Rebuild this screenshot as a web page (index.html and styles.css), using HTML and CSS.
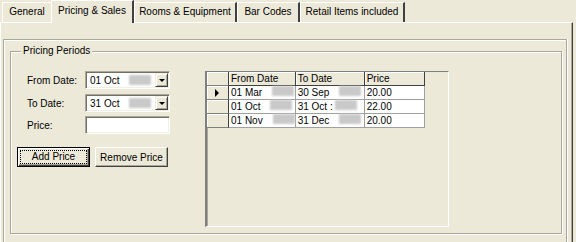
FILE: index.html
```html
<!DOCTYPE html>
<html>
<head>
  <title>Pricing &amp; Sales</title>
  <link rel="stylesheet" href="styles.css">
</head>
<body>
  <div class="tabs">
    <div class="tab tab-general">General</div>
    <div class="tab tab-active tab-pricing">Pricing &amp; Sales</div>
    <div class="tab tab-rooms">Rooms &amp; Equipment</div>
    <div class="tab tab-bar">Bar Codes</div>
    <div class="tab tab-retail">Retail Items included</div>
  </div>
  <div class="page">
    <div class="frame">
      <div class="group">
        <span class="group-title">Pricing Periods</span>
        <div class="group-body">
          <div class="form">
            <div class="field">
              <label>From Date:</label>
              <div class="combo">
                <span class="combo-text">01 Oct<span class="blur"></span></span>
                <span class="drop"><span class="arrow"></span></span>
              </div>
            </div>
            <div class="field field-to">
              <label>To Date:</label>
              <div class="combo">
                <span class="combo-text">31 Oct<span class="blur"></span></span>
                <span class="drop"><span class="arrow"></span></span>
              </div>
            </div>
            <div class="field field-price">
              <label>Price:</label>
              <div class="textbox"></div>
            </div>
            <div class="buttons">
              <button class="btn btn-default"><span class="focus">Add Price</span></button>
              <button class="btn">Remove Price</button>
            </div>
          </div>
          <div class="grid">
            <table>
              <thead>
                <tr>
                  <th class="rowhead"></th>
                  <th class="col-from">From Date</th>
                  <th class="col-to">To Date</th>
                  <th class="col-price">Price</th>
                </tr>
              </thead>
              <tbody>
                <tr>
                  <td class="rowhead"><span class="pointer"></span></td>
                  <td>01 Mar<span class="blur"></span></td>
                  <td>30 Sep<span class="blur"></span></td>
                  <td>20.00</td>
                </tr>
                <tr>
                  <td class="rowhead"></td>
                  <td>01 Oct<span class="blur"></span></td>
                  <td>31 Oct :<span class="blur blur-near"></span></td>
                  <td>22.00</td>
                </tr>
                <tr>
                  <td class="rowhead"></td>
                  <td>01 Nov<span class="blur"></span></td>
                  <td>31 Dec<span class="blur"></span></td>
                  <td>20.00</td>
                </tr>
              </tbody>
            </table>
          </div>
        </div>
      </div>
    </div>
  </div>
</body>
</html>
```

FILE: styles.css
```css
body {
  margin: 0;
  width: 576px;
  height: 242px;
  overflow: hidden;
  background-color: #ece9d8;
  font-family: "Liberation Sans", Arial, sans-serif;
  font-size: 10px;
  color: #000;
}

/* tab strip */

.tabs {
  display: flex;
  align-items: flex-end;
  height: 22px;
  padding-left: 2px;
  position: relative;
  z-index: 1;
}

.tab {
  box-sizing: border-box;
  height: 20px;
  line-height: 18px;
  text-align: center;
  border-top: 1px solid #fff;
  border-left: 1px solid #fff;
  border-right: 2px solid #404040;
  white-space: nowrap;
}

.tab-general {
  width: 49px;
  border-right: none;
}

.tab-pricing {
  width: 83px;
}

.tab-rooms {
  width: 103px;
}

.tab-bar {
  width: 63px;
}

.tab-retail {
  width: 105px;
}

.tab-active {
  height: 23px;
  margin-bottom: -1px;
  line-height: 20px;
  background-color: #ece9d8;
}

/* tab page */

.page {
  box-sizing: border-box;
  width: 573px;
  height: 220px;
  border-top: 1px solid #fff;
  border-left: 1px solid #fff;
  border-right: 1px solid #404040;
  box-shadow: inset -1px 0 0 #aca899;
  padding-top: 16px;
  padding-left: 2px;
}

.frame {
  box-sizing: border-box;
  width: 564px;
  height: 210px;
  border-top: 1px solid #aca899;
  border-left: 1px solid #aca899;
  border-right: 1px solid #aca899;
  box-shadow: inset 1px 1px 0 #fff, 1px 0 0 #fff;
  padding-top: 11px;
  padding-left: 6px;
}

.group {
  box-sizing: border-box;
  width: 552px;
  height: 183px;
  border: 1px solid #aca899;
  box-shadow: inset 1px 1px 0 #fff, 1px 1px 0 #fff;
  padding-left: 6px;
}

.group-title {
  display: inline-block;
  margin-top: -7px;
  margin-left: 4px;
  padding: 0 2px;
  height: 12px;
  line-height: 12px;
  background-color: #ece9d8;
  vertical-align: top;
}

.group-body {
  display: flex;
  margin-top: 8px;
}

/* form side */

.form {
  flex: none;
  width: 153px;
}

.field {
  display: flex;
  align-items: center;
  height: 18px;
}

.field-to {
  margin-top: 5px;
}

.field-price {
  margin-top: 4px;
}

.field label {
  flex: none;
  width: 68px;
  padding-left: 10px;
  box-sizing: border-box;
  white-space: nowrap;
}

.combo,
.textbox {
  flex: none;
  box-sizing: border-box;
  display: flex;
  align-items: center;
  width: 85px;
  height: 18px;
  background-color: #fff;
  border-top: 1px solid #aca899;
  border-left: 1px solid #aca899;
  border-right: 1px solid #fff;
  border-bottom: 1px solid #fff;
  box-shadow: inset 1px 1px 0 #716f64, inset -1px -1px 0 #f1efe2;
}

.combo-text {
  flex: 1;
  padding-left: 4px;
  display: flex;
  align-items: center;
}

.blur {
  display: inline-block;
  width: 22px;
  height: 10px;
  margin-left: 10px;
  background-color: #c9c9c9;
  filter: blur(1.2px);
}

.blur-near {
  margin-left: 2px;
}

.drop {
  box-sizing: border-box;
  width: 13px;
  height: 14px;
  margin-right: 1px;
  display: flex;
  align-items: center;
  justify-content: center;
  background-color: #ece9d8;
  border-top: 1px solid #f1efe2;
  border-left: 1px solid #f1efe2;
  border-right: 1px solid #404040;
  border-bottom: 1px solid #404040;
  box-shadow: inset 1px 1px 0 #fff, inset -1px -1px 0 #aca899;
}

.arrow {
  width: 0;
  height: 0;
  border-left: 3px solid transparent;
  border-right: 3px solid transparent;
  border-top: 3px solid #000;
}

.buttons {
  display: flex;
  gap: 5px;
  margin-top: 13px;
}

.btn {
  box-sizing: border-box;
  width: 73px;
  height: 20px;
  padding: 0;
  font-family: inherit;
  font-size: 10px;
  color: #000;
  background-color: #ece9d8;
  border-top: 1px solid #fff;
  border-left: 1px solid #fff;
  border-right: 1px solid #404040;
  border-bottom: 1px solid #404040;
  box-shadow: inset -1px -1px 0 #aca899;
}

.btn-default {
  border: 1px solid #000;
  box-shadow: inset 1px 1px 0 #fff, inset -1px -1px 0 #404040, inset -2px -2px 0 #aca899;
}

.focus {
  display: block;
  margin: 0 3px;
  line-height: 12px;
  outline: 1px dotted #000;
}

/* grid side */

.grid {
  flex: none;
  box-sizing: border-box;
  width: 244px;
  height: 156px;
  margin-left: 35px;
  border-top: 1px solid #808080;
  border-left: 2px solid #808080;
  border-right: 1px solid #fff;
  border-bottom: 1px solid #fff;
  box-shadow: inset 1px 0 0 #aca899;
}

.grid table {
  border-collapse: separate;
  border-spacing: 0;
}

.grid th,
.grid td {
  box-sizing: border-box;
  height: 14px;
  padding: 0 0 0 2px;
  text-align: left;
  font-weight: normal;
  white-space: nowrap;
  line-height: 13px;
}

.grid th {
  background-color: #ece9d8;
  border-right: 1px solid #404040;
  border-bottom: 1px solid #404040;
  box-shadow: inset 1px 1px 0 #fff;
}

.grid td {
  background-color: #fff;
  border-right: 1px solid #a0a0a0;
  border-bottom: 1px solid #a0a0a0;
}

.grid .rowhead {
  width: 22px;
  padding: 0;
  background-color: #ece9d8;
  border-right: 1px solid #404040;
  border-bottom: 1px solid #808080;
  box-shadow: inset 1px 1px 0 #fff;
}

.col-from {
  width: 66px;
}

.col-to {
  width: 69px;
}

.col-price {
  width: 60px;
}

.pointer {
  display: block;
  width: 0;
  height: 0;
  margin-left: 8px;
  border-top: 4px solid transparent;
  border-bottom: 4px solid transparent;
  border-left: 4px solid #000;
}
```
